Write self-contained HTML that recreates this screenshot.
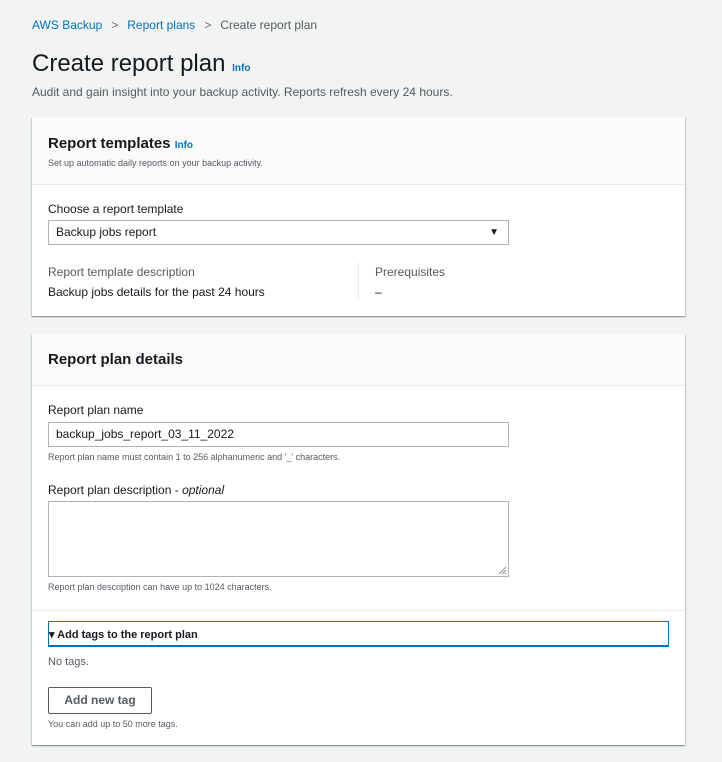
<!DOCTYPE html>
<html><head><meta charset="utf-8"><style>
*{margin:0;padding:0;box-sizing:border-box}
body{width:722px;height:762px;background:#f2f3f3;font-family:"Liberation Sans",Arial,sans-serif;color:#16191f;position:relative;overflow:hidden}
.a{position:absolute;white-space:nowrap}
.link{color:#0073bb}
.panel{position:absolute;left:32px;width:653px;background:#fff;box-shadow:0 1px 1px rgba(0,28,36,.3),1px 1px 1px rgba(0,28,36,.15),-1px 1px 1px rgba(0,28,36,.15)}
.hd{position:absolute;left:0;top:0;width:100%;background:#fafafa;border-bottom:1px solid #eaeded}
.inp{position:absolute;left:48px;width:461px;border:1px solid #aab7b8;background:#fff;font-size:12px;padding-left:7px}
.s{font-size:9px;color:#545b64}
.l{font-size:12px;color:#16191f}
</style></head><body>
<div class="a" style="left:32px;top:18px;font-size:12px"><span class="link">AWS Backup</span><span style="color:#687078;margin:0 9px">&gt;</span><span class="link">Report plans</span><span style="color:#687078;margin:0 9px">&gt;</span><span style="color:#545b64">Create report plan</span></div>
<div class="a" style="left:32px;top:50px;font-size:24px">Create report plan <span class="link" style="font-size:10px;font-weight:bold">Info</span></div>
<div class="a" style="left:32px;top:85px;font-size:12px;color:#545b64">Audit and gain insight into your backup activity. Reports refresh every 24 hours.</div>

<div class="panel" style="top:117px;height:199px">
 <div class="hd" style="height:68px"></div>
 <div class="a" style="left:16px;top:18px;font-size:15px;font-weight:bold">Report templates <span class="link" style="font-size:10px">Info</span></div>
 <div class="a s" style="left:16px;top:41px">Set up automatic daily reports on your backup activity.</div>
 <div class="a l" style="left:16px;top:85px">Choose a report template</div>
 <div class="a" style="left:326px;top:145px;width:1px;height:38px;background:#eaeded"></div>
 <div class="a l" style="left:16px;top:148px;color:#545b64">Report template description</div>
 <div class="a l" style="left:16px;top:168px">Backup jobs details for the past 24 hours</div>
 <div class="a l" style="left:343px;top:148px;color:#545b64">Prerequisites</div>
 <div class="a l" style="left:343px;top:168px">–</div>
</div>
<div class="inp" style="top:220px;height:25px;line-height:23px">Backup jobs report<span style="position:absolute;right:9px;top:0;font-size:10px">▼</span></div>

<div class="panel" style="top:334px;height:411px">
 <div class="hd" style="height:52px"></div>
 <div class="a" style="left:16px;top:17px;font-size:15px;font-weight:bold">Report plan details</div>
 <div class="a l" style="left:16px;top:69px">Report plan name</div>
 <div class="a s" style="left:16px;top:118px">Report plan name must contain 1 to 256 alphanumeric and '_' characters.</div>
 <div class="a l" style="left:16px;top:149px">Report plan description - <i>optional</i></div>
 <div class="a s" style="left:16px;top:248px">Report plan description can have up to 1024 characters.</div>
 <div class="a" style="left:0;top:276px;width:100%;height:1px;background:#eaeded"></div>
 <div class="a" style="left:16px;top:287px;width:621px;height:26px;border:1px solid #0073bb;border-width:1px 1px 2px 1px"></div>
 <div class="a" style="left:17px;top:294px;font-size:11px;font-weight:bold;color:#16191f">▾ Add tags to the report plan</div>
 <div class="a" style="left:16px;top:322px;font-size:11px;color:#545b64">No tags.</div>
 <div class="a" style="left:16px;top:353px;width:104px;height:27px;border:1px solid #545b64;border-radius:2px;font-size:12px;font-weight:bold;color:#545b64;text-align:center;line-height:25px">Add new tag</div>
 <div class="a s" style="left:16px;top:385px">You can add up to 50 more tags.</div>
</div>
<div class="inp" style="top:422px;height:25px;line-height:23px">backup_jobs_report_03_11_2022</div>
<div class="inp" style="top:501px;height:76px"><svg style="position:absolute;right:1px;bottom:1px" width="9" height="9"><path d="M8 1L1 8M8 4L4 8M8 7L7 8" stroke="#879596" stroke-width="1"/></svg></div>
</body></html>
